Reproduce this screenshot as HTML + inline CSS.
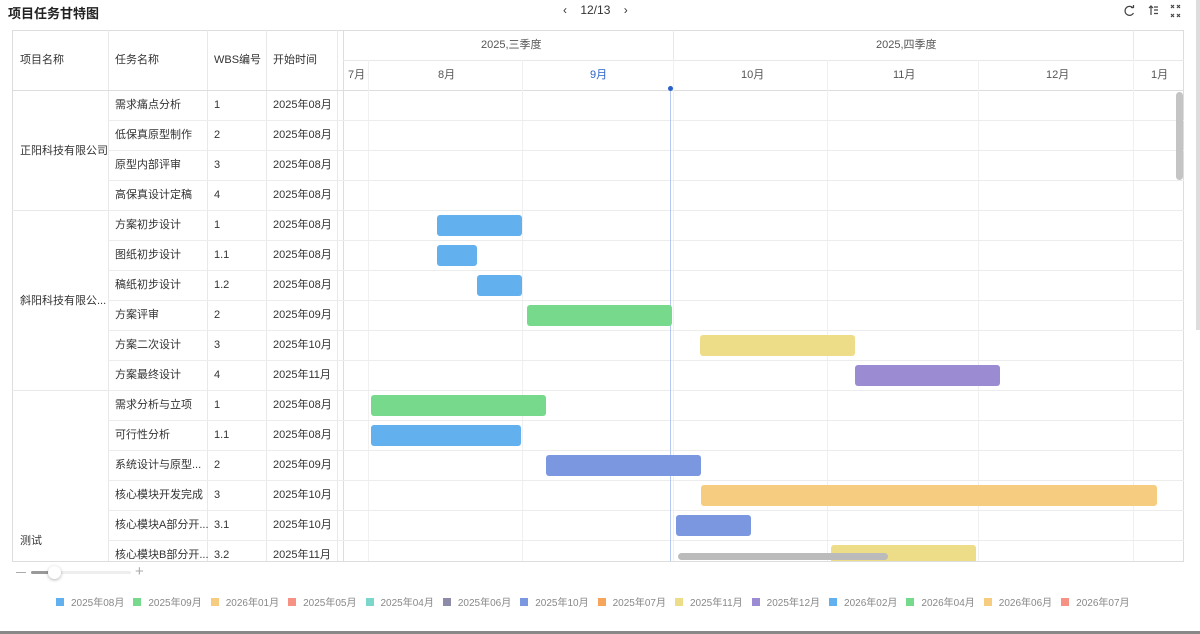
<!DOCTYPE html><html><head><meta charset="utf-8"><style>
*{box-sizing:border-box;margin:0;padding:0}
body{width:1200px;height:634px;background:#fff;font-family:"Liberation Sans","Noto Sans CJK SC",sans-serif;font-size:11px;color:#333;position:relative;overflow:hidden}
.a{position:absolute}
.t{position:absolute;white-space:nowrap}
.c{position:absolute;white-space:nowrap;height:30px;line-height:31px}
.hl{position:absolute;height:1px;background:#e8e8e8}
.vl{position:absolute;width:1px;background:#e8e8e8}
.bar{position:absolute;height:21px;border-radius:3px}
.lg{display:inline-block;margin-right:9px;color:#888}
.lg i{display:inline-block;width:8px;height:8px;margin-right:7px}
</style></head><body>
<div class="t" style="left:8px;top:3px;font-size:13px;font-weight:bold;color:#222">项目任务甘特图</div>
<div class="t" style="left:563px;top:3px;font-size:12px;color:#333">‹&nbsp;&nbsp;&nbsp;&nbsp;12/13&nbsp;&nbsp;&nbsp;&nbsp;›</div>
<svg class="a" style="left:1122px;top:4px" width="60" height="14" fill="none" stroke="#444" stroke-width="1.2">
<path d="M11 4A4.5 4.5 0 1 0 11.5 9"/><path d="M9 3.5h2.5V1"/>
<path d="M29 11V2M27 4l2-2 2 2M32 3h4M32 6h4M32 9.5h4"/>
<path d="M49 1l3 3M52 1l-3 3M49 13l3-3M52 13l-3-3M55 1l3 3M58 1l-3 3M55 13l3-3M58 13l-3-3"/>
</svg>
<div class="a" style="left:12px;top:30px;width:1172px;height:532px;border:1px solid #ddd"></div>
<div class="c" style="left:20px;top:45px">项目名称</div>
<div class="c" style="left:115px;top:45px">任务名称</div>
<div class="c" style="left:214px;top:45px">WBS编号</div>
<div class="c" style="left:273px;top:45px">开始时间</div>
<div class="vl" style="left:108px;top:30px;height:531px"></div>
<div class="vl" style="left:207px;top:30px;height:531px"></div>
<div class="vl" style="left:266px;top:30px;height:531px"></div>
<div class="vl" style="left:337px;top:30px;height:531px"></div>
<div class="vl" style="left:343px;top:30px;height:531px;background:#ddd"></div>
<div class="hl" style="left:12px;top:90px;width:1172px;background:#ddd"></div>
<div class="hl" style="left:343px;top:60px;width:841px"></div>
<div class="c" style="left:481px;top:30px;color:#555">2025,三季度</div>
<div class="c" style="left:876px;top:30px;color:#555">2025,四季度</div>
<div class="vl" style="left:673px;top:30px;height:30px"></div>
<div class="vl" style="left:1133px;top:30px;height:30px"></div>
<div class="c" style="left:348px;top:60px;color:#555">7月</div>
<div class="c" style="left:438px;top:60px;color:#555">8月</div>
<div class="c" style="left:590px;top:60px;color:#2a62c9">9月</div>
<div class="c" style="left:741px;top:60px;color:#555">10月</div>
<div class="c" style="left:893px;top:60px;color:#555">11月</div>
<div class="c" style="left:1046px;top:60px;color:#555">12月</div>
<div class="c" style="left:1151px;top:60px;color:#555">1月</div>
<div class="vl" style="left:368px;top:60px;height:501px;background:#f0f0f0"></div>
<div class="vl" style="left:522px;top:60px;height:501px;background:#f0f0f0"></div>
<div class="vl" style="left:673px;top:60px;height:501px;background:#f0f0f0"></div>
<div class="vl" style="left:827px;top:60px;height:501px;background:#f0f0f0"></div>
<div class="vl" style="left:978px;top:60px;height:501px;background:#f0f0f0"></div>
<div class="vl" style="left:1133px;top:60px;height:501px;background:#f0f0f0"></div>
<div id="rows"></div>
<div class="c" style="left:20px;top:136px">正阳科技有限公司</div>
<div class="c" style="left:20px;top:286px">斜阳科技有限公...</div>
<div class="c" style="left:20px;top:526px">测试</div>
<div class="hl" style="left:12px;top:210px;width:96px"></div>
<div class="hl" style="left:12px;top:390px;width:96px"></div>
<div class="a" style="left:670px;top:88px;width:1px;height:473px;background:#b5c8f0"></div>
<div class="a" style="left:668px;top:86px;width:5px;height:5px;border-radius:50%;background:#2a62c9"></div>
<div class="bar" style="left:437px;top:215px;width:85px;background:#63b0ef"></div>
<div class="bar" style="left:437px;top:245px;width:40px;background:#63b0ef"></div>
<div class="bar" style="left:477px;top:275px;width:45px;background:#63b0ef"></div>
<div class="bar" style="left:527px;top:305px;width:145px;background:#77d98b"></div>
<div class="bar" style="left:700px;top:335px;width:155px;background:#eedd88"></div>
<div class="bar" style="left:855px;top:365px;width:145px;background:#9b8bd3"></div>
<div class="bar" style="left:371px;top:395px;width:175px;background:#77d98b"></div>
<div class="bar" style="left:371px;top:425px;width:150px;background:#63b0ef"></div>
<div class="bar" style="left:546px;top:455px;width:155px;background:#7b97e0"></div>
<div class="bar" style="left:701px;top:485px;width:456px;background:#f6cc80"></div>
<div class="bar" style="left:676px;top:515px;width:75px;background:#7b97e0"></div>
<div class="bar" style="left:831px;top:545px;width:145px;height:16px;border-radius:3px 3px 0 0;background:#eedd88"></div>
<div class="a" style="left:678px;top:553px;width:210px;height:7px;border-radius:4px;background:#bbb"></div>
<div class="a" style="left:1176px;top:92px;width:7px;height:88px;border-radius:4px;background:#c4c4c4"></div>
<div class="a" style="left:16px;top:572px;width:10px;height:1px;background:#aaa"></div>
<div class="a" style="left:31px;top:571px;width:100px;height:3px;border-radius:2px;background:#eee"></div>
<div class="a" style="left:31px;top:571px;width:18px;height:3px;border-radius:2px;background:#999"></div>
<div class="a" style="left:48px;top:566px;width:13px;height:13px;border-radius:50%;background:#fff;box-shadow:0 1px 3px rgba(0,0,0,.3)"></div>
<div class="t" style="left:135px;top:563px;font-size:15px;color:#aaa">+</div>
<div class="t" style="left:56px;top:594px;font-size:10px">
<span class="lg"><i style="background:#63b0ef"></i>2025年08月</span><span class="lg"><i style="background:#77d98b"></i>2025年09月</span><span class="lg"><i style="background:#f6cc80"></i>2026年01月</span><span class="lg"><i style="background:#f59284"></i>2025年05月</span><span class="lg"><i style="background:#7dd6cc"></i>2025年04月</span><span class="lg"><i style="background:#8c8ca8"></i>2025年06月</span><span class="lg"><i style="background:#7b97e0"></i>2025年10月</span><span class="lg"><i style="background:#f5a55c"></i>2025年07月</span><span class="lg"><i style="background:#eedd88"></i>2025年11月</span><span class="lg"><i style="background:#9b8bd3"></i>2025年12月</span><span class="lg"><i style="background:#63b0ef"></i>2026年02月</span><span class="lg"><i style="background:#77d98b"></i>2026年04月</span><span class="lg"><i style="background:#f6cc80"></i>2026年06月</span><span class="lg"><i style="background:#f59284"></i>2026年07月</span>
</div>
<div class="a" style="left:1196px;top:0;width:4px;height:330px;background:#ddd"></div>
<div class="a" style="left:0;top:631px;width:1200px;height:3px;background:#888"></div>
<script>
var d=[["需求痛点分析","1","2025年08月"],["低保真原型制作","2","2025年08月"],["原型内部评审","3","2025年08月"],["高保真设计定稿","4","2025年08月"],["方案初步设计","1","2025年08月"],["图纸初步设计","1.1","2025年08月"],["稿纸初步设计","1.2","2025年08月"],["方案评审","2","2025年09月"],["方案二次设计","3","2025年10月"],["方案最终设计","4","2025年11月"],["需求分析与立项","1","2025年08月"],["可行性分析","1.1","2025年08月"],["系统设计与原型...","2","2025年09月"],["核心模块开发完成","3","2025年10月"],["核心模块A部分开...","3.1","2025年10月"],["核心模块B部分开...","3.2","2025年11月"]];
var h="";d.forEach(function(r,i){var y=90+i*30;
if(i>0)h+='<div class="hl" style="left:108px;top:'+y+'px;width:1076px;background:#ececec"></div>';
h+='<div class="c" style="left:115px;top:'+y+'px">'+r[0]+'</div><div class="c" style="left:214px;top:'+y+'px">'+r[1]+'</div><div class="c" style="left:273px;top:'+y+'px">'+r[2]+'</div>';});
document.getElementById("rows").innerHTML=h;
</script>
</body></html>
